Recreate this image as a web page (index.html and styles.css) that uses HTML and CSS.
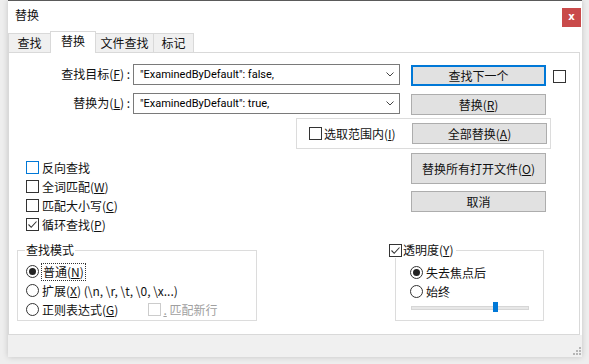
FILE: index.html
```html
<!DOCTYPE html>
<html lang="zh-CN">
<head>
<meta charset="utf-8">
<title>替换</title>
<link rel="stylesheet" href="styles.css">
</head>
<body>
<div class="window">
  <div class="titlebar">
    <span class="title">替换</span>
    <span class="close">x</span>
  </div>
  <div class="tabs">
    <div class="tab t1">查找</div>
    <div class="tab t2 active">替换</div>
    <div class="tab t3">文件查找</div>
    <div class="tab t4">标记</div>
  </div>
  <div class="panel">
    <div class="top-grid">
      <label class="lbl">查找目标(<u>F</u>) :</label>
      <div class="combo"><span class="val">"ExaminedByDefault": false,</span><svg class="chev" width="8" height="5" viewBox="0 0 8 5"><path d="M0.5 0.5 L4 4 L7.5 0.5" fill="none" stroke="#444" stroke-width="1"/></svg></div>
      <button class="btn default">查找下一个</button>
      <span class="cb solo"></span>
      <label class="lbl">替换为(<u>L</u>) :</label>
      <div class="combo"><span class="val">"ExaminedByDefault": true,</span><svg class="chev" width="8" height="5" viewBox="0 0 8 5"><path d="M0.5 0.5 L4 4 L7.5 0.5" fill="none" stroke="#444" stroke-width="1"/></svg></div>
      <button class="btn">替换(<u>R</u>)</button>
      <span></span>
    </div>
    <div class="selgroup">
      <span class="cb"></span><span class="txt">选取范围内(<u>I</u>)</span>
      <button class="btn">全部替换(<u>A</u>)</button>
    </div>
    <div class="mid">
      <div class="checks">
        <div class="row"><span class="cb hover"></span><span class="txt">反向查找</span></div>
        <div class="row"><span class="cb"></span><span class="txt">全词匹配(<u>W</u>)</span></div>
        <div class="row"><span class="cb"></span><span class="txt">匹配大小写(<u>C</u>)</span></div>
        <div class="row"><span class="cb checked"><svg width="11" height="11" viewBox="0 0 11 11"><path d="M1.5 5.5 L4.2 8.3 L9.5 2.5" fill="none" stroke="#333" stroke-width="1.1"/></svg></span><span class="txt">循环查找(<u>P</u>)</span></div>
      </div>
      <div class="btncol">
        <button class="btn tall">替换所有打开文件(<u>O</u>)</button>
        <button class="btn">取消</button>
      </div>
    </div>
    <div class="bottom">
      <div class="group mode">
        <div class="gtitle">查找模式</div>
        <div class="row r1"><span class="rb on"></span><span class="txt focus">普通(<u>N</u>)</span></div>
        <div class="row r2"><span class="rb"></span><span class="txt">扩展(<u>X</u>) (\n, \r, \t, \0, \x...)</span></div>
        <div class="row r3"><span class="rb"></span><span class="txt">正则表达式(<u>G</u>)</span><span class="cb disabled"></span><span class="txt dis"><u>.</u> 匹配新行</span></div>
      </div>
      <div class="group trans">
        <div class="gtitle cbtitle"><span class="cb checked"><svg width="11" height="11" viewBox="0 0 11 11"><path d="M1.5 5.5 L4.2 8.3 L9.5 2.5" fill="none" stroke="#333" stroke-width="1.1"/></svg></span><span class="txt">透明度(<u>Y</u>)</span></div>
        <div class="row r1"><span class="rb on"></span><span class="txt">失去焦点后</span></div>
        <div class="row r2"><span class="rb"></span><span class="txt">始终</span></div>
        <div class="slider"><div class="track"></div><div class="thumb"></div></div>
      </div>
    </div>
  </div>
  <div class="band">
    <svg class="grip" width="9" height="9" viewBox="0 0 9 9"><g fill="#b5b5b5"><rect x="7" y="1" width="2" height="2"/><rect x="4" y="4" width="2" height="2"/><rect x="7" y="4" width="2" height="2"/><rect x="1" y="7" width="2" height="2"/><rect x="4" y="7" width="2" height="2"/><rect x="7" y="7" width="2" height="2"/></g></svg>
  </div>
</div>
</body>
</html>
```

FILE: styles.css
```css
* { box-sizing: border-box; }
html, body { margin: 0; padding: 0; }
body {
  width: 589px;
  height: 364px;
  overflow: hidden;
  background: #eeeeee;
  font-family: "Noto Sans CJK SC", "Noto Sans", sans-serif;
  font-size: 12px;
  color: #111;
}
u { text-decoration: underline; text-underline-offset: 1px; }

.window {
  margin-left: 8px;
  width: 574px;
  height: 357px;
  background: #ffffff;
  border-top: 1px solid #5a5a5a;
  box-shadow: 0 0 6px rgba(0,0,0,0.18);
  display: flex;
  flex-direction: column;
}

.titlebar {
  height: 30px;
  display: flex;
  align-items: flex-start;
  justify-content: space-between;
}
.title {
  margin-left: 7px;
  margin-top: 6px;
  line-height: 16px;
  font-size: 12px;
}
.close {
  margin-top: 7px;
  margin-right: 1px;
  width: 19px;
  height: 19px;
  background: #c94a4a;
  color: #fff;
  font-family: "DejaVu Sans", sans-serif;
  font-weight: bold;
  font-size: 10px;
  line-height: 17px;
  text-align: center;
}

.tabs {
  height: 21px;
  display: flex;
  align-items: flex-end;
  position: relative;
  z-index: 1;
}
.tab {
  height: 19px;
  border: 1px solid #d9d9d9;
  border-bottom: none;
  background: #f0f0f0;
  text-align: center;
  line-height: 18px;
  margin-left: -1px;
}
.t1 { width: 43px; margin-left: 0; }
.t2 { width: 46px; }
.t3 { width: 59px; }
.t4 { width: 41px; }
.tab.active {
  height: 22px;
  margin-bottom: -1px;
  background: #fff;
  line-height: 17px;
  position: relative;
  z-index: 2;
}

.panel {
  width: 572px;
  height: 283px;
  border: 1px solid #d9d9d9;
  background: #fff;
}

.top-grid {
  margin-top: 11px;
  display: grid;
  grid-template-columns: 124px 267px 146px 20px;
  grid-auto-rows: 22px;
  row-gap: 7px;
}
.lbl {
  text-align: right;
  padding-right: 3px;
  line-height: 20px;
  white-space: nowrap;
}
.combo {
  height: 21px;
  border: 1px solid #7a7a7a;
  background: #fff;
  display: flex;
  align-items: center;
  justify-content: space-between;
  padding-left: 6px;
  padding-right: 5px;
}
.val {
  font-family: Roboto, "Liberation Sans", sans-serif;
  font-size: 11px;
  line-height: 18px;
  white-space: nowrap;
  color: #000;
}
.chev { display: block; }

.btn {
  font-family: inherit;
  font-size: 12px;
  color: #111;
  background: #e1e1e1;
  border: 1px solid #adadad;
  height: 21px;
  width: 135px;
  padding: 0;
  margin: 0;
  line-height: 18px;
}
.top-grid .btn { margin-left: 11px; margin-top: 1px; }
.btn.default {
  border: 1px solid #0078d7;
  box-shadow: inset 0 0 0 1px #0078d7;
}
.btn.tall { height: 31px; }

.cb {
  display: inline-block;
  flex: none;
  width: 13px;
  height: 13px;
  border: 1px solid #333;
  background: #fff;
  position: relative;
}
.cb svg { position: absolute; left: 0; top: 0; }
.cb.hover { border-color: #0078d7; }
.cb.solo { margin-left: 7px; margin-top: 6px; }

.txt { white-space: nowrap; line-height: 16px; }

.selgroup {
  margin-top: 3px;
  margin-left: 287px;
  width: 255px;
  height: 31px;
  border: 1px solid #dcdcdc;
  display: flex;
  align-items: center;
  padding-left: 12px;
  padding-right: 3px;
}
.selgroup .txt { margin-left: 2px; }
.selgroup .btn { margin-left: auto; }

.mid {
  display: flex;
  height: 101px;
}
.checks {
  width: 402px;
  padding-left: 17px;
  padding-top: 9px;
}
.row {
  display: flex;
  align-items: center;
  height: 19px;
}
.row .txt { margin-left: 3px; }
.btncol {
  padding-top: 4px;
  display: flex;
  flex-direction: column;
  gap: 7px;
}

.bottom {
  display: flex;
  align-items: flex-start;
}
.group {
  border: 1px solid #dcdcdc;
  height: 71px;
}
.mode {
  margin-left: 8px;
  width: 240px;
  padding-left: 8px;
}
.gtitle {
  display: flex;
  width: max-content;
  align-items: center;
  background: #fff;
  height: 16px;
  margin-top: -9px;
  margin-left: -1px;
  padding: 0 1px;
  line-height: 16px;
}
.mode .row.r1 { margin-top: 4px; }
.rb {
  display: inline-block;
  flex: none;
  width: 13px;
  height: 13px;
  border: 1px solid #333;
  border-radius: 50%;
  background: #fff;
  position: relative;
}
.rb.on::after {
  content: "";
  position: absolute;
  left: 2px;
  top: 2px;
  width: 7px;
  height: 7px;
  border-radius: 50%;
  background: #222;
}
.focus {
  outline: 1px dotted #333;
  outline-offset: 0px;
  padding: 0 1px;
}
.cb.disabled { margin-left: 30px; border-color: #cccccc; }
.txt.dis { color: #a0a0a0; margin-left: 2px; }

.trans {
  margin-left: 138px;
  width: 149px;
  padding-left: 14px;
}
.cbtitle {
  margin-left: -21px;
  padding: 0 2px 0 0;
}
.cbtitle .txt { margin-left: 1px; }
.trans .row.r1 { margin-top: 5px; }
.slider {
  position: relative;
  width: 118px;
  height: 11px;
  margin-top: 1px;
  margin-left: 1px;
}
.track {
  position: absolute;
  left: 0;
  right: 0;
  top: 4px;
  height: 4px;
  background: #e7e7e7;
  border: 1px solid #d6d6d6;
}
.thumb {
  position: absolute;
  left: 82px;
  top: 0;
  width: 5px;
  height: 10px;
  background: #0078d7;
}

.band {
  height: 22px;
  background: #f0f0f0;
  display: flex;
  justify-content: flex-end;
  align-items: flex-end;
  padding: 0 1px 2px 0;
}
.grip { display: block; }
```
